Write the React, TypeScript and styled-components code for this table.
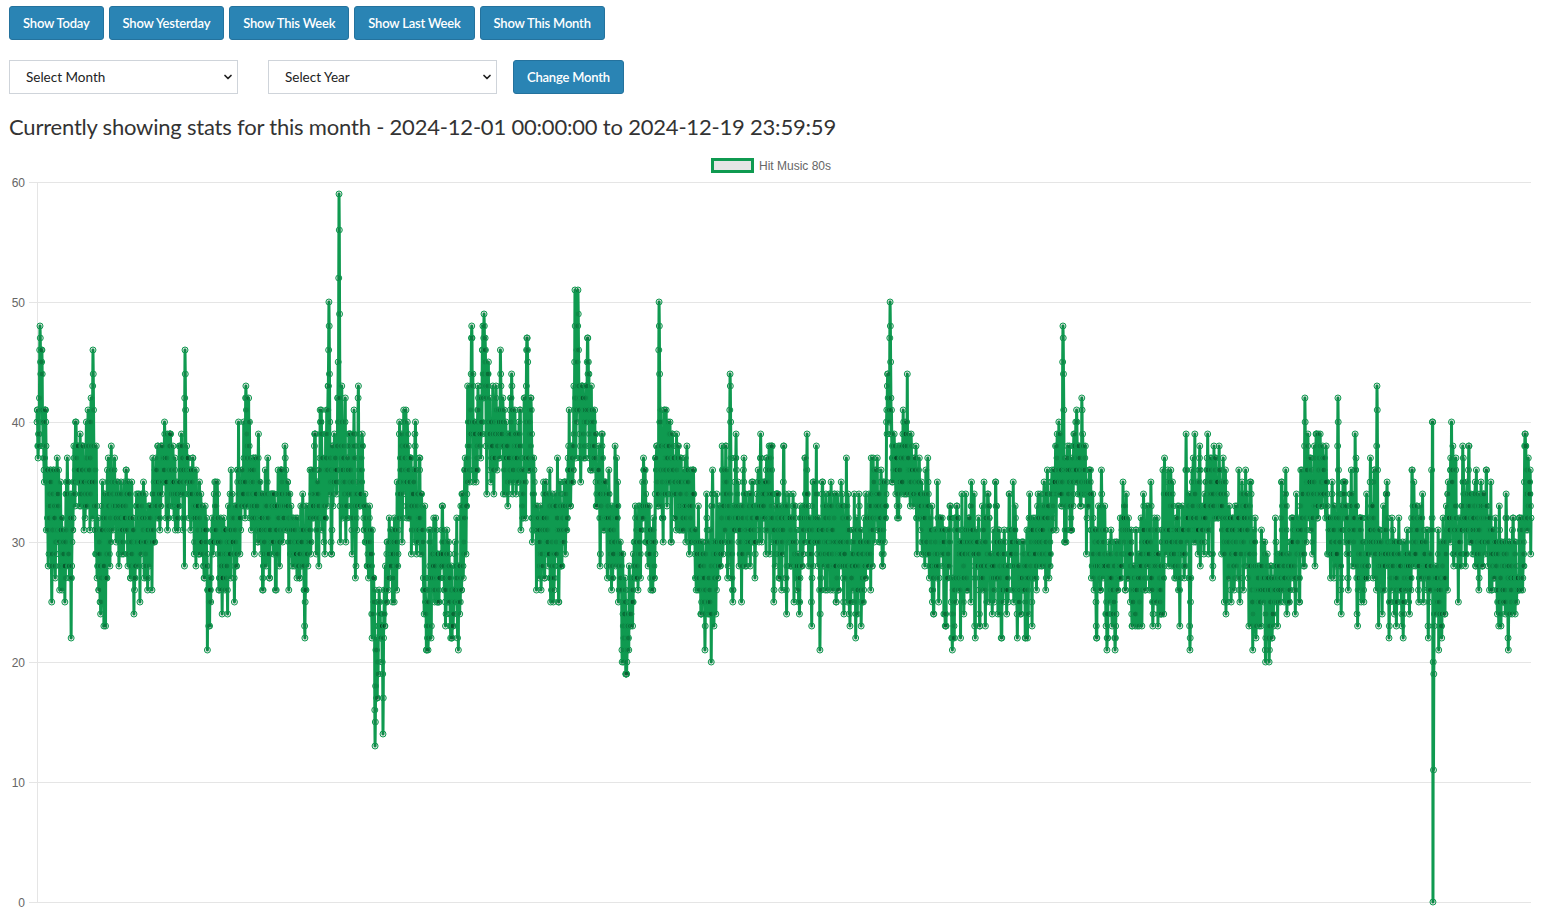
import React, { useMemo } from "react";
import styled, { createGlobalStyle } from "styled-components";
import { ChevronDown } from "lucide-react";

const GlobalStyle = createGlobalStyle`
  html, body {
    margin: 0;
    background: #fff;
    font-family: Lato, "Noto Sans", sans-serif;
    color: #333;
  }
`;

const Page = styled.div`
  padding: 6px 9px 0 9px;
`;

const ButtonRow = styled.div`
  display: flex;
  gap: 5px;
  align-items: center;
`;

const FormRow = styled.div`
  display: flex;
  align-items: center;
  margin-top: 20px;
`;

const Btn = styled.button`
  height: 34px;
  padding: 0 13px;
  background: #2a84b4;
  border: 1px solid #24729d;
  border-radius: 3px;
  color: #fff;
  font-family: Lato, "Noto Sans", sans-serif;
  font-size: 13px;
  font-weight: 600;
  letter-spacing: -0.2px;
  cursor: pointer;
`;

const SelectWrap = styled.div<{ $gap: number }>`
  position: relative;
  width: 229px;
  height: 34px;
  margin-right: ${(p) => p.$gap}px;
`;

const Select = styled.select`
  appearance: none;
  width: 100%;
  height: 100%;
  border: 1px solid #cfd4da;
  border-radius: 0;
  background: #fff;
  padding: 0 16px;
  font-family: Lato, "Noto Sans", sans-serif;
  font-size: 13.5px;
  color: #222;
`;

const Chevron = styled.span`
  position: absolute;
  right: 4px;
  top: 11px;
  pointer-events: none;
  display: flex;
  color: #222;
`;

const Heading = styled.h2`
  margin: 18px 0 0 0;
  font-size: 22px;
  line-height: 30px;
  font-weight: 400;
  color: #333;
  letter-spacing: -0.2px;
`;

const ChartBox = styled.div`
  margin-top: 8px;
  width: 1530px;
  height: 780px;
`;

const GREEN = "#0f9a50";
const W = 1530;
const LEFT = 28;
const RIGHT = 1522;
const TOP = 32;
const BOTTOM = 752;

function mulberry32(a: number) {
  return function () {
    a |= 0;
    a = (a + 0x6d2b79f5) | 0;
    let t = Math.imul(a ^ (a >>> 15), 1 | a);
    t = (t + Math.imul(t ^ (t >>> 7), 61 | t)) ^ t;
    return ((t ^ (t >>> 14)) >>> 0) / 4294967296;
  };
}

// rough trend read off the month (page px -> listeners)
const trend: [number, number][] = [
  [37, 40], [45, 39], [52, 30], [65, 30], [75, 35], [95, 37], [105, 32], [130, 32],
  [150, 31], [165, 35], [185, 38], [200, 33], [215, 29], [235, 29], [245, 36], [255, 33],
  [275, 33], [285, 34], [295, 28], [305, 31], [320, 36], [335, 39], [350, 37], [365, 31],
  [378, 20], [388, 24], [400, 35], [415, 35], [425, 29], [445, 29], [460, 27], [470, 37],
  [490, 40], [510, 38], [530, 36], [540, 31], [560, 31], [575, 41], [590, 40], [600, 33],
  [615, 28], [628, 24], [640, 30], [660, 34], [680, 33], [695, 30], [705, 27], [715, 31],
  [740, 33], [760, 34], [780, 31], [800, 30], [830, 31], [860, 30], [875, 34], [890, 37],
  [905, 36], [915, 33], [930, 30], [960, 30], [990, 31], [1010, 29], [1030, 29], [1045, 31],
  [1060, 36], [1075, 36], [1090, 33], [1105, 28], [1115, 26], [1125, 30], [1150, 31],
  [1180, 29], [1200, 34], [1220, 33], [1240, 30], [1260, 28], [1270, 25], [1285, 28],
  [1300, 32], [1330, 33], [1345, 31], [1365, 29], [1380, 30], [1400, 28], [1425, 28],
  [1433, 26], [1440, 26], [1450, 31], [1470, 31], [1500, 29], [1515, 29], [1531, 32],
];

const forced: [number, number][] = [
  [40, 48], [93, 46], [185, 46], [246, 43], [329, 50], [339, 59], [375, 13],
  [484, 49], [527, 47], [575, 51], [578, 51], [626, 19], [659, 50], [705, 21],
  [730, 44], [890, 50], [1063, 48], [1115, 21], [1190, 21], [1269, 20], [1305, 42],
  [1338, 42], [1377, 43], [1433, 0], [1525, 39],
];

function meanAt(px: number) {
  for (let i = 0; i < trend.length - 1; i++) {
    const [x0, y0] = trend[i];
    const [x1, y1] = trend[i + 1];
    if (px >= x0 && px <= x1) return y0 + ((px - x0) / (x1 - x0)) * (y1 - y0);
  }
  return 30;
}

function makeData() {
  const n = 5472;
  const rnd = mulberry32(1980);
  const gauss = () => {
    const u = Math.max(rnd(), 1e-9);
    const v = rnd();
    return Math.sqrt(-2 * Math.log(u)) * Math.cos(2 * Math.PI * v);
  };
  const vals: number[] = [];
  let slow = 0;
  let fast = 0;
  for (let i = 0; i < n; i++) {
    const px = 37 + (i * (1531 - 37)) / (n - 1);
    slow = 0.97 * slow + gauss() * 0.3;
    fast = 0.5 * fast + gauss() * 2.3;
    const v = Math.round(meanAt(px) + slow + fast);
    vals.push(Math.max(1, Math.min(58, v)));
  }
  const idx = (px: number) => Math.round(((px - 37) * (n - 1)) / (1531 - 37));
  forced.forEach(([px, v]) => {
    const i = idx(px);
    const base = vals[i];
    const steps = [0, 0.15, 0.45, 0.75];
    steps.forEach((s, k) => {
      vals[i + k] = Math.round(v + (base - v) * s);
    });
    vals[i - 1] = Math.round(v + (base - v) * 0.3);
  });
  // the outage: straight from 40 down to zero and back
  const o = idx(1433);
  vals[o - 2] = 40;
  vals[o - 1] = 40;
  vals[o] = 0;
  vals[o + 1] = 20;
  return vals;
}

function LineChart() {
  const data = useMemo(makeData, []);
  const n = data.length;
  const pts = data.map((v, i) => ({
    x: LEFT + (i * (RIGHT - LEFT)) / (n - 1),
    y: BOTTOM - (v / 60) * (BOTTOM - TOP),
  }));
  const d = pts.map((p, i) => `${i ? "L" : "M"}${p.x.toFixed(2)} ${p.y.toFixed(1)}`).join(" ");
  const ticks = [0, 10, 20, 30, 40, 50, 60];

  return (
    <ChartBox>
      <svg width={W} height={780} viewBox={`0 0 ${W} 780`} fontFamily="'Liberation Sans', Arial, sans-serif">
        <rect x={703.5} y={9.5} width={40} height={12} fill="rgba(0,0,0,0.1)" stroke={GREEN} strokeWidth={3} />
        <text x={750} y={20} fontSize={12} fill="#666">Hit Music 80s</text>

        {ticks.map((t) => {
          const y = BOTTOM - (t / 60) * (BOTTOM - TOP) + 0.5;
          return (
            <g key={t}>
              <line x1={20} x2={RIGHT} y1={y} y2={y} stroke="#e5e5e5" strokeWidth={1} />
              <text x={16} y={y + 4} fontSize={12} fill="#666" textAnchor="end">{t}</text>
            </g>
          );
        })}
        <line x1={LEFT + 0.5} x2={LEFT + 0.5} y1={TOP} y2={BOTTOM + 1} stroke="#e5e5e5" strokeWidth={1} />

        <path d={d} fill="none" stroke={GREEN} strokeWidth={3} strokeLinejoin="round" />
        {pts.map((p, i) => (
          <circle key={i} cx={p.x} cy={p.y} r={3} fill="rgba(0,0,0,0.1)" stroke={GREEN} strokeWidth={1} />
        ))}
      </svg>
    </ChartBox>
  );
}

const quickButtons = ["Show Today", "Show Yesterday", "Show This Week", "Show Last Week", "Show This Month"];

export default function App() {
  return (
    <>
      <GlobalStyle />
      <Page>
        <ButtonRow>
          {quickButtons.map((b) => (
            <Btn key={b}>{b}</Btn>
          ))}
        </ButtonRow>
        <FormRow>
          <SelectWrap $gap={30}>
            <Select defaultValue="">
              <option value="">Select Month</option>
            </Select>
            <Chevron><ChevronDown size={12} strokeWidth={3.5} /></Chevron>
          </SelectWrap>
          <SelectWrap $gap={16}>
            <Select defaultValue="">
              <option value="">Select Year</option>
            </Select>
            <Chevron><ChevronDown size={12} strokeWidth={3.5} /></Chevron>
          </SelectWrap>
          <Btn>Change Month</Btn>
        </FormRow>
        <Heading>Currently showing stats for this month - 2024-12-01 00:00:00 to 2024-12-19 23:59:59</Heading>
        <LineChart />
      </Page>
    </>
  );
}
